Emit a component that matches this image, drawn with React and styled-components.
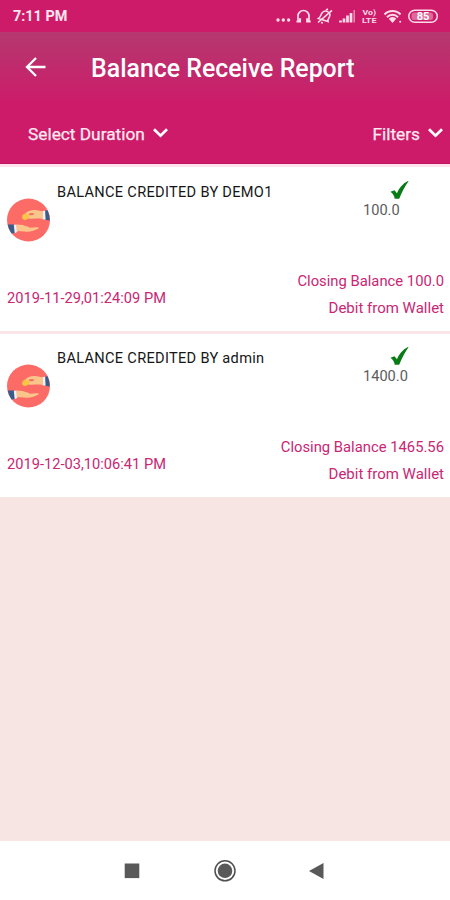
import React from "react"
import styled, { createGlobalStyle } from "styled-components"

const GlobalStyle = createGlobalStyle`
  * {
    box-sizing: border-box;
  }
  body {
    margin: 0;
    font-family: Roboto, "Liberation Sans", sans-serif;
  }
  svg {
    display: block;
    flex: none;
  }
`

const Screen = styled.div`
  display: flex;
  flex-direction: column;
  width: 450px;
  height: 900px;
  overflow: hidden;
  background: #f7e5e4;
`

const StatusBar = styled.div`
  display: flex;
  align-items: center;
  justify-content: space-between;
  height: 32px;
  padding: 0 11px 0 13px;
  background: #ce1b69;
  color: #fbdce9;
`

const Clock = styled.span`
  margin-top: 2px;
  font-size: 14.4px;
  font-weight: 700;
  line-height: 20px;
  color: #fde6f0;
`

const Header = styled.header`
  height: 132px;
  background: linear-gradient(#b5386f 0, #bc2f6d 24px, #cd1b69 72px);
  border-bottom: 1px solid #c01660;
  color: #fff;
`

const TitleRow = styled.div`
  display: flex;
  align-items: center;
  height: 72px;
  padding-left: 25px;

  > svg {
    margin-bottom: 2px;
  }
`

const Title = styled.h1`
  margin: 2px 0 0 44px;
  font-size: 24.9px;
  font-weight: 500;
  line-height: 30px;
  white-space: nowrap;
`

const FilterRow = styled.div`
  display: flex;
  justify-content: space-between;
  padding: 18px 7px 0 28px;
`

const Dropdown = styled.div`
  display: flex;
  gap: 8px;
  font-size: 17.3px;
  line-height: 24px;
  color: #ffe9f2;
  -webkit-text-stroke: 0.25px #ffe9f2;

  svg {
    margin-top: 6px;
  }
`

const Card = styled.article`
  display: flex;
  flex-direction: column;
  justify-content: space-between;
  height: ${(p) => p.$height}px;
  padding: ${(p) => p.$padTop}px 6px 9px 7px;
  border-top: 3px solid ${(p) => p.$divider};
  background: #fff;
`

const CardTop = styled.div`
  display: flex;
  align-items: flex-start;

  > svg {
    margin-top: 18px;
  }
`

const Name = styled.div`
  flex: 1;
  margin: 2px 0 0 7px;
  font-size: 14.6px;
  letter-spacing: 0.3px;
  line-height: 20px;
  color: #161616;
`

const Amount = styled.div`
  width: 81px;
  font-size: 14.6px;
  line-height: 18px;
  color: #5c5c5c;

  svg {
    margin: 1px 0 2px 27px;
  }
`

const CardBottom = styled.div`
  display: flex;
  justify-content: space-between;
  align-items: center;
  font-size: 14.8px;
  line-height: 27px;
  color: #c92673;
`

const Details = styled.div`
  text-align: right;
`

const Wallet = styled.div`
  font-size: 15px;
`

const DateText = styled.span`
  margin-top: 6px;
  font-size: 14.65px;
`

const NavBar = styled.nav`
  display: flex;
  align-items: center;
  justify-content: space-between;
  height: 59px;
  margin-top: auto;
  padding: 0 125px 0 124px;
  background: #fff;
`

const StatusIcons = () => (
  <svg width="164" height="20" viewBox="275 6 164 20" fill="none" stroke="currentColor">
    <g fill="currentColor" stroke="none">
      <circle cx="278" cy="20" r="1.7" />
      <circle cx="283.3" cy="20" r="1.7" />
      <circle cx="288.6" cy="20" r="1.7" />
    </g>
    <path d="M298 21v-5a5.5 5.5 0 0 1 11 0v5" strokeWidth="1.7" />
    <path d="M296.5 21.5h3.5v-3.2M310.7 21.5h-3.5v-3.2" strokeWidth="2.1" />
    <g strokeWidth="1.6">
      <path d="M318.5 18.5l9.500 3c-.5-1.700.3-2.800 1.300-4.300c2.500-5-4.500-8.500-7.500-4c-.9 1.500-1.100 3.800-3.300 5.300z" />
      <path d="M318 22.500L332 10.300M326 10l2-1M321 22.500l2 .5" />
    </g>
    <path d="M340.5 22.5v-2M344 22.5v-4M347.5 22.5v-7M351 22.5v-9.5" strokeWidth="2.7" />
    <path d="M354.2 22.5V10" strokeWidth="1.5" opacity=".6" />
    <g fill="currentColor" stroke="none" fontFamily="Roboto" fontWeight="700" fontSize="6.8">
      <text x="362.5" y="15" textLength="13.5" lengthAdjust="spacingAndGlyphs">
        Vo)
      </text>
      <text x="362" y="23.2" textLength="14.5" lengthAdjust="spacingAndGlyphs">
        LTE
      </text>
    </g>
    <path d="M384.5 14.500a11 11 0 0 1 16 0M387 17.200a7.500 7.500 0 0 1 11 0" strokeWidth="2" />
    <path d="M388.8 18.700a5 5 0 0 1 7.400 0l-3.700 4.300z" fill="currentColor" stroke="none" />
    <circle cx="400.2" cy="21.8" r="1" fill="currentColor" stroke="none" />
    <rect x="408.8" y="10.2" width="28.5" height="12" rx="6" strokeWidth="1.5" />
    <rect x="411.5" y="12.5" width="21.5" height="7.4" rx="2.5" fill="currentColor" stroke="none" opacity=".4" />
    <text
      x="423"
      y="20.2"
      fontFamily="Roboto"
      fontSize="11"
      fontWeight="700"
      textAnchor="middle"
      fill="#fff"
      stroke="none"
    >
      85
    </text>
  </svg>
)

const BackArrow = () => (
  <svg width="22" height="22" viewBox="0 0 22 22" fill="none" stroke="#fff" strokeWidth="2.3">
    <path d="M20.5 11H2.5M11 2L2 11l9 9" />
  </svg>
)

const Chevron = () => (
  <svg width="15" height="11" viewBox="0 0 15 11" fill="none" stroke="#fff" strokeWidth="2.7">
    <path d="M1 1.200l6.500 6.500L14 1.200" />
  </svg>
)

const HandsIcon = () => (
  <svg width="43" height="44" viewBox="0 0 43 44">
    <circle cx="21.5" cy="22" r="21.5" fill="#fd6b67" />
    <path d="M40.4 12l-3.100 1.300.3 8.500 5.200.7A21.500 21.500 0 0 0 40.400 12z" fill="#395d88" />
    <path d="M35.5 13l2.600-.3.5 9-3.100-.4z" fill="#f3eef2" />
    <path d="M36 13.500l-6-1.300c-5-1-9.500.8-11.500 3l3 5.300c4 .9 9.500-.5 14.500.5z" fill="#fac58b" />
    <path d="M22 15.600c1.800-1 4.500-.9 5.500.5-1.500 1.500-4 1.500-5.500.8z" fill="#f07560" />
    <path d="M15.5 17l3.500-2 3.500 3-1.500 3-3.500 1.300-2.500-2z" fill="#f8c544" />
    <path d="M.7 26.500A21.500 21.500 0 0 0 4.500 35.500l3.700-.5-.7-8.500z" fill="#395d88" />
    <path d="M6.800 26.700l2.700-.2.900 7.300-2.700 1.500z" fill="#f3eef2" />
    <path
      d="M9.500 26.500l6.500.5c2 1.600 5.500 1 6.500 2.700l7-.4c2.200-.5 3.300.7 1.200 1.700-4 2-8.500 3.300-13 2.600l-8-.5z"
      fill="#fac58b"
    />
  </svg>
)

const CheckMark = () => (
  <svg width="20" height="18" viewBox="0 0 20 18">
    <path
      d="M.5 10.800l4-1.600 2.400 3C9.200 7 13 2 19-.5 14.800 5.500 12 11 9.200 17.800H4.700C4.500 15 3 12.700.5 10.800z"
      fill="#087b16"
    />
  </svg>
)

const NavButtons = () => (
  <NavBar>
    <svg width="16" height="16" viewBox="0 0 16 16">
      <rect x=".7" y=".5" width="14.6" height="14.6" fill="#595959" />
    </svg>
    <svg width="24" height="24" viewBox="0 0 24 24">
      <circle cx="12" cy="11.8" r="10" fill="#fff" stroke="#505050" strokeWidth="1.5" />
      <circle cx="12" cy="11.8" r="7.3" fill="#595959" />
    </svg>
    <svg width="16" height="16" viewBox="0 0 16 16">
      <path d="M14.500 0v16L0 8z" fill="#595959" />
    </svg>
  </NavBar>
)

const entries = [
  {
    name: "BALANCE CREDITED BY DEMO1",
    amount: "100.0",
    date: "2019-11-29,01:24:09 PM",
    closing: "100.0",
    height: 167,
    padTop: 13,
    divider: "#fce3ed",
  },
  {
    name: "BALANCE CREDITED BY admin",
    amount: "1400.0",
    date: "2019-12-03,10:06:41 PM",
    closing: "1465.56",
    height: 166,
    padTop: 12,
    divider: "#fae6e8",
  },
]

const Entry = ({ name, amount, date, closing, height, padTop, divider }) => (
  <Card $height={height} $padTop={padTop} $divider={divider}>
    <CardTop>
      <HandsIcon />
      <Name>{name}</Name>
      <Amount>
        <CheckMark />
        {amount}
      </Amount>
    </CardTop>
    <CardBottom>
      <DateText>{date}</DateText>
      <Details>
        <div>Closing Balance {closing}</div>
        <Wallet>Debit from Wallet</Wallet>
      </Details>
    </CardBottom>
  </Card>
)

const App = () => {
  return (
    <>
      <GlobalStyle />
      <Screen>
        <StatusBar>
          <Clock>7:11 PM</Clock>
          <StatusIcons />
        </StatusBar>
        <Header>
          <TitleRow>
            <BackArrow />
            <Title>Balance Receive Report</Title>
          </TitleRow>
          <FilterRow>
            <Dropdown>
              Select Duration
              <Chevron />
            </Dropdown>
            <Dropdown>
              Filters
              <Chevron />
            </Dropdown>
          </FilterRow>
        </Header>
        {entries.map((entry) => (
          <Entry key={entry.date} {...entry} />
        ))}
        <NavButtons />
      </Screen>
    </>
  )
}

export default App
